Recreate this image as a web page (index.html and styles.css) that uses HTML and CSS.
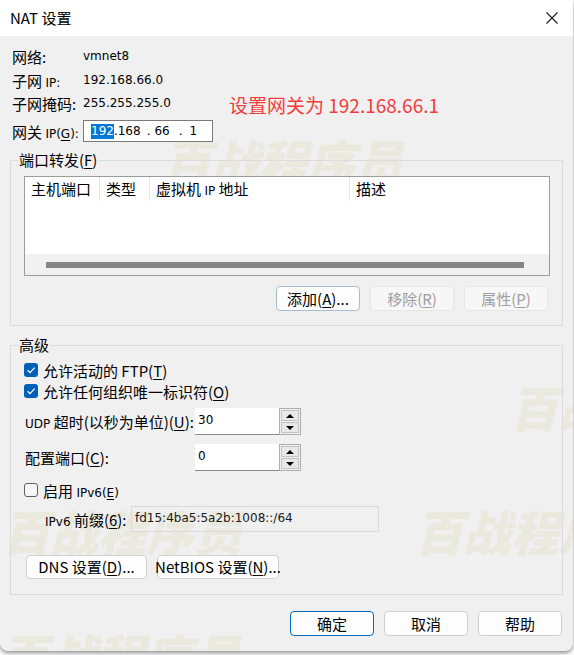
FILE: index.html
```html
<!DOCTYPE html>
<html lang="zh-CN">
<head>
<meta charset="utf-8">
<title>NAT 设置</title>
<link rel="stylesheet" href="styles.css">
</head>
<body>
<div class="dialog">
  <div class="wm wm1">百战程序员</div>
  <div class="wm wm2">百战程序员</div>
  <div class="wm wm3">百战程序员</div>
  <div class="wm wm4">百战程序员</div>
  <div class="wm wm5">百战程序员</div>

  <div class="titlebar">
    <span class="title">NAT 设置</span>
    <svg class="close" width="12" height="12" viewBox="0 0 12 12"><path d="M0.5 0.5 L11.5 11.5 M11.5 0.5 L0.5 11.5" stroke="#1b1b1b" stroke-width="1.1" fill="none"/></svg>
  </div>

  <div class="content">
    <div class="info">
      <div class="row r1"><span class="lbl">网络:</span><span class="l">vmnet8</span></div>
      <div class="row r2"><span class="lbl">子网 <span class="l">IP:</span></span><span class="l">192.168.66.0</span></div>
      <div class="row r3"><span class="lbl">子网掩码:</span><span class="l val">255.255.255.0</span><span class="note">设置网关为 192.168.66.1</span></div>
      <div class="row r4"><span class="lbl">网关 <span class="l">IP(<u>G</u>):</span></span>
        <div class="ipbox l"><span class="sel">192</span><span>.168</span><span class="d1">.</span><span class="o1">66</span><span class="d2">.</span><span class="o2">1</span></div>
      </div>
    </div>

    <fieldset class="group g1">
      <legend>端口转发(<u>F</u>)</legend>
      <div class="list">
        <div class="lhead">
          <div class="col c1">主机端口</div>
          <div class="col c2">类型</div>
          <div class="col c3">虚拟机 <span class="l">IP</span> 地址</div>
          <div class="col c4">描述</div>
        </div>
        <div class="lbody"></div>
        <div class="hscroll"><div class="thumb"></div></div>
      </div>
      <div class="btnrow">
        <div class="btn focus">添加(<u>A</u>)...</div>
        <div class="btn dis">移除(<u>R</u>)</div>
        <div class="btn dis">属性(<u>P</u>)</div>
      </div>
    </fieldset>

    <fieldset class="group g2">
      <legend>高级</legend>
      <div class="chkrow c-1"><span class="cb on"><svg width="14" height="14" viewBox="0 0 14 14"><path d="M3.6 7.3 L6 9.6 L10.6 4.6" stroke="#fff" stroke-width="1.2" fill="none"/></svg></span><span>允许活动的 FTP(<u>T</u>)</span></div>
      <div class="chkrow c-2"><span class="cb on"><svg width="14" height="14" viewBox="0 0 14 14"><path d="M3.6 7.3 L6 9.6 L10.6 4.6" stroke="#fff" stroke-width="1.2" fill="none"/></svg></span><span>允许任何组织唯一标识符(<u>O</u>)</span></div>
      <div class="spinrow s1">
        <span class="slbl"><span class="l">UDP</span> 超时(以秒为单位)(<u>U</u>):</span>
        <div class="spin"><div class="sval l">30</div><div class="sbtns"><div class="sb"><span class="up"></span></div><div class="sb"><span class="dn"></span></div></div></div>
      </div>
      <div class="spinrow s2">
        <span class="slbl">配置端口(<u>C</u>):</span>
        <div class="spin"><div class="sval l">0</div><div class="sbtns"><div class="sb"><span class="up"></span></div><div class="sb"><span class="dn"></span></div></div></div>
      </div>
      <div class="chkrow c-3"><span class="cb off"></span><span>启用 <span class="l">IPv6(<u>E</u>)</span></span></div>
      <div class="prefrow">
        <span class="plbl"><span class="l">IPv6</span> 前缀(<u>6</u>):</span>
        <div class="pfield l">fd15:4ba5:5a2b:1008::/64</div>
      </div>
      <div class="dnsrow">
        <div class="btn b-dns">DNS 设置(<u>D</u>)...</div>
        <div class="btn b-nb">NetBIOS 设置(<u>N</u>)...</div>
      </div>
    </fieldset>

    <div class="footer">
      <div class="btn def">确定</div>
      <div class="btn">取消</div>
      <div class="btn">帮助</div>
    </div>
  </div>
</div>
</body>
</html>
```

FILE: styles.css
```css
* { box-sizing: border-box; }
html, body { margin: 0; padding: 0; }
body {
  width: 574px;
  height: 655px;
  overflow: hidden;
  background: #ffffff;
  font-family: "Noto Sans CJK SC", "Noto Sans", sans-serif;
  font-size: 15px;
  color: #000;
}
u { text-decoration: underline; text-underline-offset: 2px; text-decoration-thickness: 1px; }
.l { font-family: "DejaVu Sans", "Noto Sans CJK SC", sans-serif; font-size: 12px; }

.dialog {
  position: relative;
  width: 573px;
  height: 651px;
  background: #f0f0f0;
  border-radius: 0 0 8px 8px;
  box-shadow: 0 2px 4px rgba(0, 0, 0, 0.45);
  overflow: hidden;
  display: flex;
  flex-direction: column;
}

.wm {
  position: absolute;
  z-index: 0;
  font-size: 48px;
  line-height: 48px;
  font-weight: 900;
  font-style: italic;
  color: #e9e9de;
  white-space: nowrap;
  letter-spacing: 0;
}
.wm1 { left: 163px; top: 136px; }
.wm2 { left: 510px; top: 382px; }
.wm3 { left: 2px; top: 506px; }
.wm4 { left: 415px; top: 506px; }
.wm5 { left: 0px; top: 630px; }

.titlebar {
  position: relative;
  z-index: 1;
  flex: none;
  height: 36px;
  background: #ffffff;
  display: flex;
  align-items: center;
  justify-content: space-between;
  padding: 0 15px 0 10px;
}
.title { font-size: 15px; line-height: 20px; }

.content { position: relative; z-index: 1; flex: 1; }

.info { padding: 10px 0 0 12px; display: flex; flex-direction: column; }
.row { display: flex; align-items: center; height: 20px; white-space: nowrap; }
.r2 { margin-top: 4px; }
.r3 { margin-top: 3px; }
.r4 { margin-top: 7px; height: 22px; }
.lbl { width: 71px; flex: none; }
.val { width: 146px; flex: none; }
.note {
  font-size: 19px;
  line-height: 20px;
  padding-top: 4px;
  color: #f23d3d;
}

.ipbox {
  width: 130px;
  height: 22px;
  background: #fff;
  border: 1px solid #7a7a7a;
  display: flex;
  align-items: center;
  padding-left: 7px;
  color: #000;
}
.ipbox .sel { background: #0078d7; color: #fff; line-height: 15px; }
.ipbox .d1 { margin-left: 6px; }
.ipbox .o1 { margin-left: 4px; }
.ipbox .d2 { margin-left: 9px; }
.ipbox .o2 { margin-left: 7px; }

.group {
  margin: 9px 10px 0 10px;
  padding: 0;
  border: 1px solid #dcdcdc;
  min-width: 0;
}
.group legend {
  margin-left: 7px;
  padding: 0 1px;
  height: 18px;
  line-height: 18px;
  font-size: 15px;
}
.g2 { margin-top: 10px; padding: 0 0 15px 0; }

.list {
  margin: 7px 0 0 13px;
  width: 526px;
  height: 100px;
  background: #fff;
  border: 1px solid #9c9c9c;
  display: flex;
  flex-direction: column;
}
.lhead { display: flex; height: 24px; flex: none; }
.col { height: 24px; line-height: 24px; padding-left: 6px; white-space: nowrap; position: relative; }
.c1 { width: 75px; }
.c2 { width: 50px; }
.c3 { width: 200px; }
.c4 { flex: 1; }
.c1, .c2, .c3 { border-right: 1px solid #e5e5e5; }
.lbody { flex: 1; }
.hscroll {
  flex: none;
  height: 21px;
  background: #f1f1f1;
  display: flex;
  align-items: center;
  padding-left: 21px;
}
.thumb { width: 478px; height: 6px; background: #858585; }

.btnrow {
  display: flex;
  justify-content: flex-end;
  gap: 10px;
  margin: 10px 14px 14px 0;
}
.btn {
  height: 25px;
  width: 84px;
  background: #fdfdfd;
  border: 1px solid #d0d0d0;
  border-radius: 4px;
  display: flex;
  align-items: center;
  justify-content: center;
  white-space: nowrap;
  line-height: 20px;
}
.btn.focus { border-color: #a6bccf; }
.btn.dis { background: #f7f7f7; border-color: #e6e6e6; color: #9d9d9d; }
.btn.def { border-color: #0067c0; }

.chkrow { display: flex; align-items: center; height: 20px; padding-left: 13px; white-space: nowrap; }
.c-1 { margin-top: 6px; }
.c-2 { margin-top: 1px; }
.c-3 { margin-top: 9px; }
.cb {
  width: 14px;
  height: 14px;
  border-radius: 3px;
  margin-right: 5px;
  flex: none;
  display: flex;
}
.cb.on { background: #005fb8; }
.cb.off { background: #f7f7f7; border: 1px solid #5f5f5f; }

.spinrow { display: flex; align-items: center; height: 27px; padding-left: 14px; white-space: nowrap; }
.s1 { margin-top: 7px; }
.s2 { margin-top: 9px; }
.slbl { width: 170px; flex: none; }
.spin { display: flex; height: 27px; }
.sval {
  width: 84px;
  height: 27px;
  background: #fff;
  border-bottom: 1px solid #8a8a8a;
  padding: 0 0 0 3px;
  line-height: 25px;
}
.sbtns {
  width: 22px;
  height: 27px;
  border: 1px solid #adadad;
  display: flex;
  flex-direction: column;
  padding: 1px;
  gap: 1px;
  background: #f0f0f0;
}
.sb {
  flex: 1;
  background: #e8e8e8;
  border: 1px solid #c4c4c4;
  display: flex;
  align-items: center;
  justify-content: center;
}
.up { width: 0; height: 0; border-left: 4px solid transparent; border-right: 4px solid transparent; border-bottom: 4px solid #000; }
.dn { width: 0; height: 0; border-left: 4px solid transparent; border-right: 4px solid transparent; border-top: 4px solid #000; }

.prefrow { display: flex; align-items: center; height: 26px; margin-top: 6px; padding-left: 34px; white-space: nowrap; }
.plbl { width: 86px; flex: none; }
.pfield {
  width: 248px;
  height: 26px;
  border: 1px solid #d9d9d9;
  padding-left: 3px;
  line-height: 22px;
  color: #1a1a1a;
}

.dnsrow { display: flex; gap: 10px; margin-top: 23px; padding-left: 15px; }
.dnsrow .btn { height: 24px; }
.b-dns { width: 121px; }
.b-nb { width: 122px; }

.footer {
  display: flex;
  justify-content: flex-end;
  gap: 10px;
  margin-top: 16px;
  padding-right: 11px;
}
```
